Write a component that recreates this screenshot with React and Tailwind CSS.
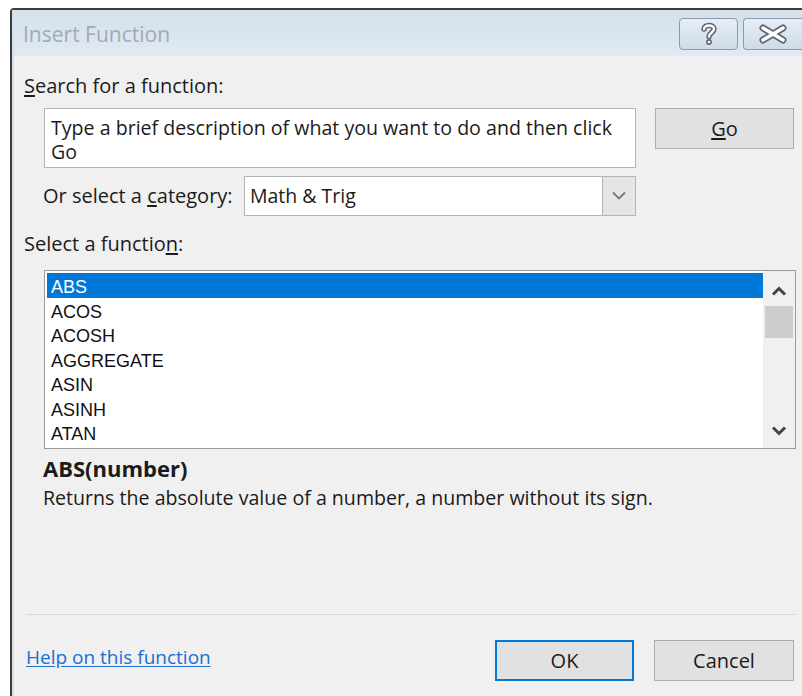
import React from "react";

const functions = ["ABS", "ACOS", "ACOSH", "AGGREGATE", "ASIN", "ASINH", "ATAN"];

function HelpGlyph() {
  return (
    <svg width="18" height="26" viewBox="0 0 18 26">
      <path d="M4 8 C4 3.5 14 3 14 8 C14 11.5 9 12 9 15.5" fill="none" stroke="#5e6670" strokeWidth="5.5" strokeLinecap="round" />
      <circle cx="9" cy="21" r="2.9" fill="#5e6670" />
      <path d="M4 8 C4 3.5 14 3 14 8 C14 11.5 9 12 9 15.5" fill="none" stroke="#ffffff" strokeWidth="2.4" strokeLinecap="round" />
      <circle cx="9" cy="21" r="1.3" fill="#ffffff" />
    </svg>
  );
}

function CloseGlyph() {
  return (
    <svg width="28" height="20" viewBox="0 0 28 20">
      <path d="M4 4 L24 16 M24 4 L4 16" fill="none" stroke="#5e6670" strokeWidth="7" strokeLinecap="round" />
      <path d="M4 4 L24 16 M24 4 L4 16" fill="none" stroke="#ffffff" strokeWidth="3.5" strokeLinecap="round" />
    </svg>
  );
}

function Chevron({ up = false, color = "#444", weight = 2.4 }) {
  return (
    <svg width="16" height="10" viewBox="0 0 16 10">
      <path
        d={up ? "M2 8.5 L8 2.5 L14 8.5" : "M2 1.5 L8 7.5 L14 1.5"}
        fill="none"
        stroke={color}
        strokeWidth={weight}
      />
    </svg>
  );
}

function DialogButton({ children, primary = false, className = "" }) {
  return (
    <div
      className={
        "flex items-center justify-center bg-[#e1e1e1] text-[20px] text-[#1b1b1b] " +
        (primary ? "border-2 border-[#0078d7] " : "border border-[#adadad] ") +
        className
      }
    >
      {children}
    </div>
  );
}

export default function App() {
  return (
    <div className="w-[802px] h-[696px] overflow-hidden bg-white pt-[8px] pl-[10px] font-['Open_Sans',sans-serif] text-[#1b1b1b]">
      <div className="h-full border-t-2 border-l-2 border-[#3c3c3c] rounded-tl-[4px] flex flex-col">
        <div className="h-full border-l-2 border-[#d6e0eb] flex flex-col">
          {/* caption bar */}
          <div className="h-[46px] flex items-start bg-gradient-to-b from-[#d4e0ec] to-[#e0e9f3] border-b border-[#e3eaf2]">
            <div className="pl-[9px] pt-[11px] text-[21px] leading-[26px] text-[#a2aab3]">Insert Function</div>
            <div className="ml-auto mt-[8px] flex gap-[5px]">
              <div className="w-[59px] h-[32px] rounded-[4px] border border-[#8c9bab] bg-gradient-to-b from-[#e6eef6] to-[#cedbe8] flex items-center justify-center">
                <HelpGlyph />
              </div>
              <div className="w-[59px] h-[32px] rounded-l-[4px] border border-r-0 border-[#8c9bab] bg-gradient-to-b from-[#e6eef6] to-[#cedbe8] flex items-center justify-center">
                <CloseGlyph />
              </div>
            </div>
          </div>

          {/* dialog body */}
          <div className="flex-1 bg-[#f0f0f0] flex flex-col pl-[10px] pt-[18px]">
            <div className="text-[20px] leading-[24px]">
              <span className="underline underline-offset-2">S</span>earch for a function:
            </div>

            <div className="mt-[10px] flex items-start">
              <div className="ml-[20px] w-[592px] h-[60px] bg-white border border-[#b4b4b4] pl-[6px] pr-[4px] pt-[7px] text-[19.6px] leading-[24px]">
                Type a brief description of what you want to do and then click Go
              </div>
              <DialogButton className="ml-[19px] w-[139px] h-[41px]">
                <span>
                  <span className="underline underline-offset-2">G</span>o
                </span>
              </DialogButton>
            </div>

            <div className="mt-[8px] flex items-center">
              <div className="ml-[19px] w-[201px] text-[20px] leading-[24px] whitespace-nowrap">
                Or select a <span className="underline underline-offset-2">c</span>ategory:
              </div>
              <div className="w-[392px] h-[40px] bg-white border border-[#b4b4b4] flex items-stretch">
                <div className="flex-1 pl-[5px] flex items-center text-[19.5px]">Math &amp; Trig</div>
                <div className="w-[33px] bg-[#e5e5e5] border-l border-[#b4b4b4] flex items-center justify-center">
                  <Chevron color="#777" weight={1.8} />
                </div>
              </div>
            </div>

            <div className="mt-[16px] text-[20px] leading-[24px]">
              Select a functio<span className="underline underline-offset-2">n</span>:
            </div>

            {/* function list */}
            <div className="mt-[14px] ml-[20px] w-[752px] h-[179px] bg-white border border-[#9a9a9a] flex">
              <div className="flex-1 pl-[2px] pt-[2px] font-['Liberation_Sans',sans-serif] text-[18px]">
                {functions.map((name, i) => (
                  <div
                    key={name}
                    className={
                      "h-[24.5px] pt-[5px] leading-[19.5px] pl-[4px] " +
                      (i === 0 ? "bg-[#0078d7] text-white" : "text-[#111]")
                    }
                  >
                    {name}
                  </div>
                ))}
              </div>
              <div className="w-[32px] bg-[#f0f0f0] flex flex-col items-center">
                <div className="h-[34px] flex items-center justify-center pt-[6px]">
                  <Chevron up color="#444" weight={3} />
                </div>
                <div className="w-[28px] h-[32px] bg-[#cdcdcd] mt-[1px]" />
                <div className="mt-auto h-[34px] flex items-center justify-center">
                  <Chevron color="#444" weight={3} />
                </div>
              </div>
            </div>

            <div className="mt-[7px] ml-[19px] text-[22px] leading-[24px] font-bold">ABS(number)</div>
            <div className="mt-[6px] ml-[19px] text-[19.6px] leading-[24px]">
              Returns the absolute value of a number, a number without its sign.
            </div>

            <div className="mt-[104px] ml-[2px] mr-[6px] h-px bg-[#d9d9d9]" />

            <div className="mt-[25px] flex items-start">
              <div className="ml-[2px] mt-[4px] text-[19px] leading-[26px] text-[#1a6fd0] underline underline-offset-2">
                Help on this function
              </div>
              <DialogButton primary className="ml-auto w-[139px] h-[41px]">OK</DialogButton>
              <DialogButton className="ml-[20px] mr-[8px] w-[140px] h-[41px]">Cancel</DialogButton>
            </div>
          </div>
        </div>
      </div>
    </div>
  );
}
